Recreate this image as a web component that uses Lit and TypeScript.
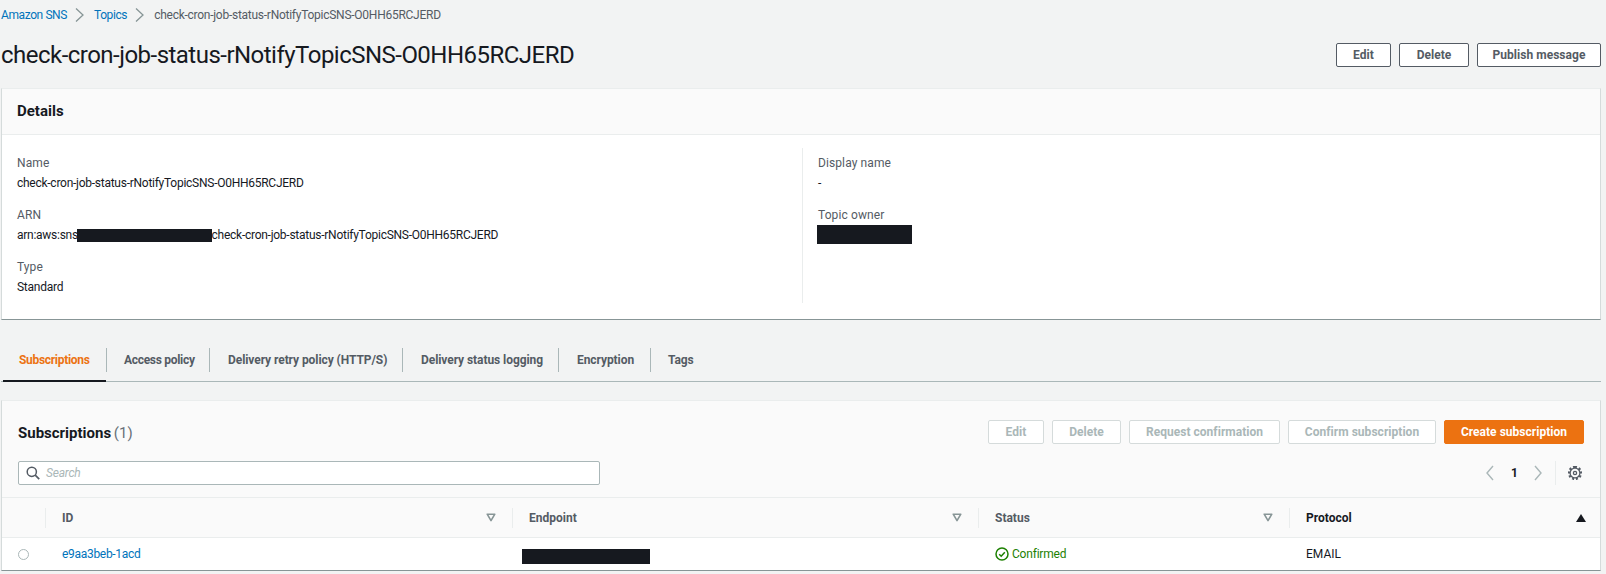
import { LitElement, html, css } from "lit";
import { customElement } from "lit/decorators.js";

const chevron = html`<svg class="crumb-sep" width="12" height="16" viewBox="0 0 12 16"><path d="M3 1.5l7 6.5-7 6.5" fill="none" stroke="#879596" stroke-width="1.3"/></svg>`;
const sortIcon = html`<svg class="sort" width="10" height="9" viewBox="0 0 10 9"><path d="M1.2 1.2h7.6L5 7.6z" fill="none" stroke="#879596" stroke-width="1.6" stroke-linejoin="round"/></svg>`;

@customElement("app-root")
export class AppRoot extends LitElement {
  static styles = css`
    :host { display: block; width: 1606px; height: 574px; overflow: hidden; background: #f2f3f3; color: #16191f;
      font-family: Roboto, "Noto Sans", sans-serif; font-size: 12px; line-height: 20px; }
    * { box-sizing: border-box; }
    .page { padding: 5px 5px 0 1px; }
    a { color: #0073bb; text-decoration: none; }
    .crumbs { display: flex; align-items: center; height: 20px; font-size: 12px; color: #545b64; letter-spacing: -0.26px; }
    .crumbs a { letter-spacing: -0.4px; }
    .crumb-sep { margin: 0 9px 0 6px; }
    .head { display: flex; justify-content: space-between; align-items: flex-start; height: 63px; }
    h1 { margin: 0; padding-top: 14px; font-size: 24px; line-height: 32px; font-weight: 400; letter-spacing: -0.52px; }
    .actions { display: flex; gap: 8px; padding-top: 18px; }
    .btn { display: flex; align-items: center; justify-content: center; height: 24px; border: 1px solid #545b64; border-radius: 2px;
      background: #fff; color: #545b64; font-weight: 700; font-size: 12px; letter-spacing: 0.03px; white-space: nowrap; }
    .btn.dis { border-color: #d5dbdb; color: #aab7b8; }
    .btn.primary { border-color: #ec7211; background: #ec7211; color: #fff; }
    .btn-row { display: flex; gap: 8px; }
    .card { background: #fff; border: 1px solid #eaeded; border-left-color: #d5dbdb; border-right-color: #d5dbdb; border-bottom-color: #879596; }
    .card-head { background: #fafafa; height: 46px; display: flex; align-items: center; padding: 0 0 2px 15px; font-size: 15px; font-weight: 700; border-bottom: 1px solid #eaeded; }
    .details { display: grid; grid-template-columns: 800px 1fr; padding: 13px 0 16px; height: 184px; }
    .col { padding: 5px 0 0 15px; height: 155px; }
    .col + .col { border-left: 1px solid #eaeded; }
    .field { height: 52px; }
    .label { color: #545b64; font-size: 12px; line-height: 20px; letter-spacing: 0.1px; }
    .value { font-size: 12px; line-height: 20px; display: flex; align-items: center; letter-spacing: -0.26px; }
    .redact { display: inline-block; background: #16191f; }
    .tabs { display: flex; height: 36px; margin-top: 26px; border-bottom: 1px solid #aab7b8; position: relative; }
    .tab { height: 24px; margin-top: 2px; display: flex; align-items: center; font-size: 12px; font-weight: 700; color: #545b64; border-left: 1px solid #aab7b8; white-space: nowrap; letter-spacing: -0.07px; }
    .tab.on { border-left: none; color: #ec7211; }
    .tab.tight { letter-spacing: -0.3px; }
    .tab-line { position: absolute; left: 2px; bottom: -1px; width: 103px; height: 2px; background: #16191f; }
    .subs { margin-top: 18px; background: #fafafa; height: 171px; }
    .subs-top { height: 97px; border-bottom: 1px solid #eaeded; padding: 19px 16px 0 16px; }
    .row1 { display: flex; justify-content: space-between; height: 24px; align-items: center; }
    .title { font-size: 15px; font-weight: 700; padding-top: 2px; }
    .title span { font-weight: 400; color: #687078; margin-left: -1px; }
    .row2 { display: flex; justify-content: space-between; margin-top: 17px; height: 24px; }
    .search { width: 582px; height: 24px; background: #fff; border: 1px solid #aab7b8; border-radius: 2px; display: flex; align-items: center; padding-left: 7px; gap: 6px; color: #aab7b8; font-style: italic; font-size: 12px; letter-spacing: -0.2px; }
    .pager { display: flex; align-items: center; color: #16191f; font-weight: 700; font-size: 12px; }
    .pager .num { margin: 0 15px 0 16px; }
    .pager .div { width: 1px; height: 24px; background: #eaeded; margin: 0 12px; }
    .gear { margin-right: 2px; }
    .cols { display: grid; grid-template-columns: 44px 467px 466px 311px 1fr; }
    .th-row { height: 40px; background: #fafafa; border-bottom: 1px solid #eaeded; align-items: center; }
    .th { height: 20px; padding: 0 16px; display: flex; align-items: center; justify-content: space-between; font-size: 12px; font-weight: 700; color: #545b64; border-right: 1px solid #eaeded; }
    .th.last { border-right: none; color: #16191f; padding-right: 14px; }
    .td-row { height: 32px; background: #fff; align-items: center; font-size: 12px; }
    .td { padding: 0 16px; display: flex; align-items: center; }
    .td a { letter-spacing: -0.3px; }
    .radio { width: 11px; height: 11px; border-radius: 50%; border: 1px solid #aab7b8; background: #fff; }
    .ok { color: #1d8102; gap: 3px; letter-spacing: -0.2px; }
    .plain { color: #16191f; }
  `;

  render() {
    return html`<div class="page">
      <nav class="crumbs"><a href="#">Amazon SNS</a>${chevron}<a href="#">Topics</a>${chevron}<span>check-cron-job-status-rNotifyTopicSNS-O0HH65RCJERD</span></nav>
      <div class="head">
        <h1>check-cron-job-status-rNotifyTopicSNS-O0HH65RCJERD</h1>
        <div class="actions">
          <div class="btn" style="width:55px">Edit</div>
          <div class="btn" style="width:70px">Delete</div>
          <div class="btn" style="width:124px">Publish message</div>
        </div>
      </div>
      <section class="card">
        <div class="card-head">Details</div>
        <div class="details">
          <div class="col">
            <div class="field"><div class="label">Name</div><div class="value">check-cron-job-status-rNotifyTopicSNS-O0HH65RCJERD</div></div>
            <div class="field"><div class="label">ARN</div><div class="value">arn:aws:sns:<span class="redact" style="width:135px;height:13px;margin-left:-4px"></span>check-cron-job-status-rNotifyTopicSNS-O0HH65RCJERD</div></div>
            <div class="field"><div class="label">Type</div><div class="value">Standard</div></div>
          </div>
          <div class="col">
            <div class="field"><div class="label">Display name</div><div class="value">-</div></div>
            <div class="field"><div class="label">Topic owner</div><div class="value"><span class="redact" style="width:95px;height:19px;margin-left:-1px"></span></div></div>
          </div>
        </div>
      </section>
      <div class="tabs">
        <div class="tab on tight" style="width:105px;padding-left:18px">Subscriptions</div>
        <div class="tab tight" style="width:103px;padding-left:17px">Access policy</div>
        <div class="tab" style="width:193px;padding-left:18px">Delivery retry policy (HTTP/S)</div>
        <div class="tab" style="width:156px;padding-left:18px">Delivery status logging</div>
        <div class="tab" style="width:92px;padding-left:18px">Encryption</div>
        <div class="tab" style="padding-left:17px">Tags</div>
        <div class="tab-line"></div>
      </div>
      <section class="card subs">
        <div class="subs-top">
          <div class="row1">
            <div class="title">Subscriptions <span>(1)</span></div>
            <div class="btn-row">
              <div class="btn dis" style="width:56px">Edit</div>
              <div class="btn dis" style="width:69px">Delete</div>
              <div class="btn dis" style="width:151px">Request confirmation</div>
              <div class="btn dis" style="width:148px">Confirm subscription</div>
              <div class="btn primary" style="width:140px">Create subscription</div>
            </div>
          </div>
          <div class="row2">
            <div class="search">
              <svg width="14" height="14" viewBox="0 0 14 14"><circle cx="5.8" cy="5.8" r="4.6" fill="none" stroke="#545b64" stroke-width="1.5"/><path d="M9.2 9.2l4 4" stroke="#545b64" stroke-width="1.7"/></svg>
              <span>Search</span>
            </div>
            <div class="pager">
              <svg width="10" height="16" viewBox="0 0 10 16"><path d="M8 1L2 8l6 7" fill="none" stroke="#aab7b8" stroke-width="1.4"/></svg>
              <span class="num">1</span>
              <svg width="10" height="16" viewBox="0 0 10 16"><path d="M2 1l6 7-6 7" fill="none" stroke="#aab7b8" stroke-width="1.4"/></svg>
              <span class="div"></span>
              <svg class="gear" width="14" height="14" viewBox="0 0 14 14"><g fill="none" stroke="#545b64"><path stroke-width="2.2" stroke-dasharray="2 1.93" d="M7 .9a6.1 6.1 0 1 0 0 12.2 6.1 6.1 0 1 0 0-12.2z"/><circle cx="7" cy="7" r="4.9" stroke-width="1.3"/><circle cx="7" cy="7" r="1.6" stroke-width="1.3"/></g></svg>
            </div>
          </div>
        </div>
        <div class="cols th-row">
          <div class="th"></div>
          <div class="th"><span>ID</span>${sortIcon}</div>
          <div class="th"><span>Endpoint</span>${sortIcon}</div>
          <div class="th"><span>Status</span>${sortIcon}</div>
          <div class="th last"><span>Protocol</span><svg width="10" height="8" viewBox="0 0 10 8"><path d="M5 0l5 8H0z" fill="#16191f"/></svg></div>
        </div>
        <div class="cols td-row">
          <div class="td"><span class="radio"></span></div>
          <div class="td"><a href="#">e9aa3beb-1acd</a></div>
          <div class="td"><span class="redact" style="width:128px;height:15px;margin-top:5px;margin-left:-7px"></span></div>
          <div class="td ok"><svg width="14" height="14" viewBox="0 0 14 14"><circle cx="7" cy="7" r="6" fill="none" stroke="#1d8102" stroke-width="1.5"/><path d="M4.2 7.2l2 2 3.6-4" fill="none" stroke="#1d8102" stroke-width="1.5"/></svg>Confirmed</div>
          <div class="td plain">EMAIL</div>
        </div>
      </section>
    </div>`;
  }
}
